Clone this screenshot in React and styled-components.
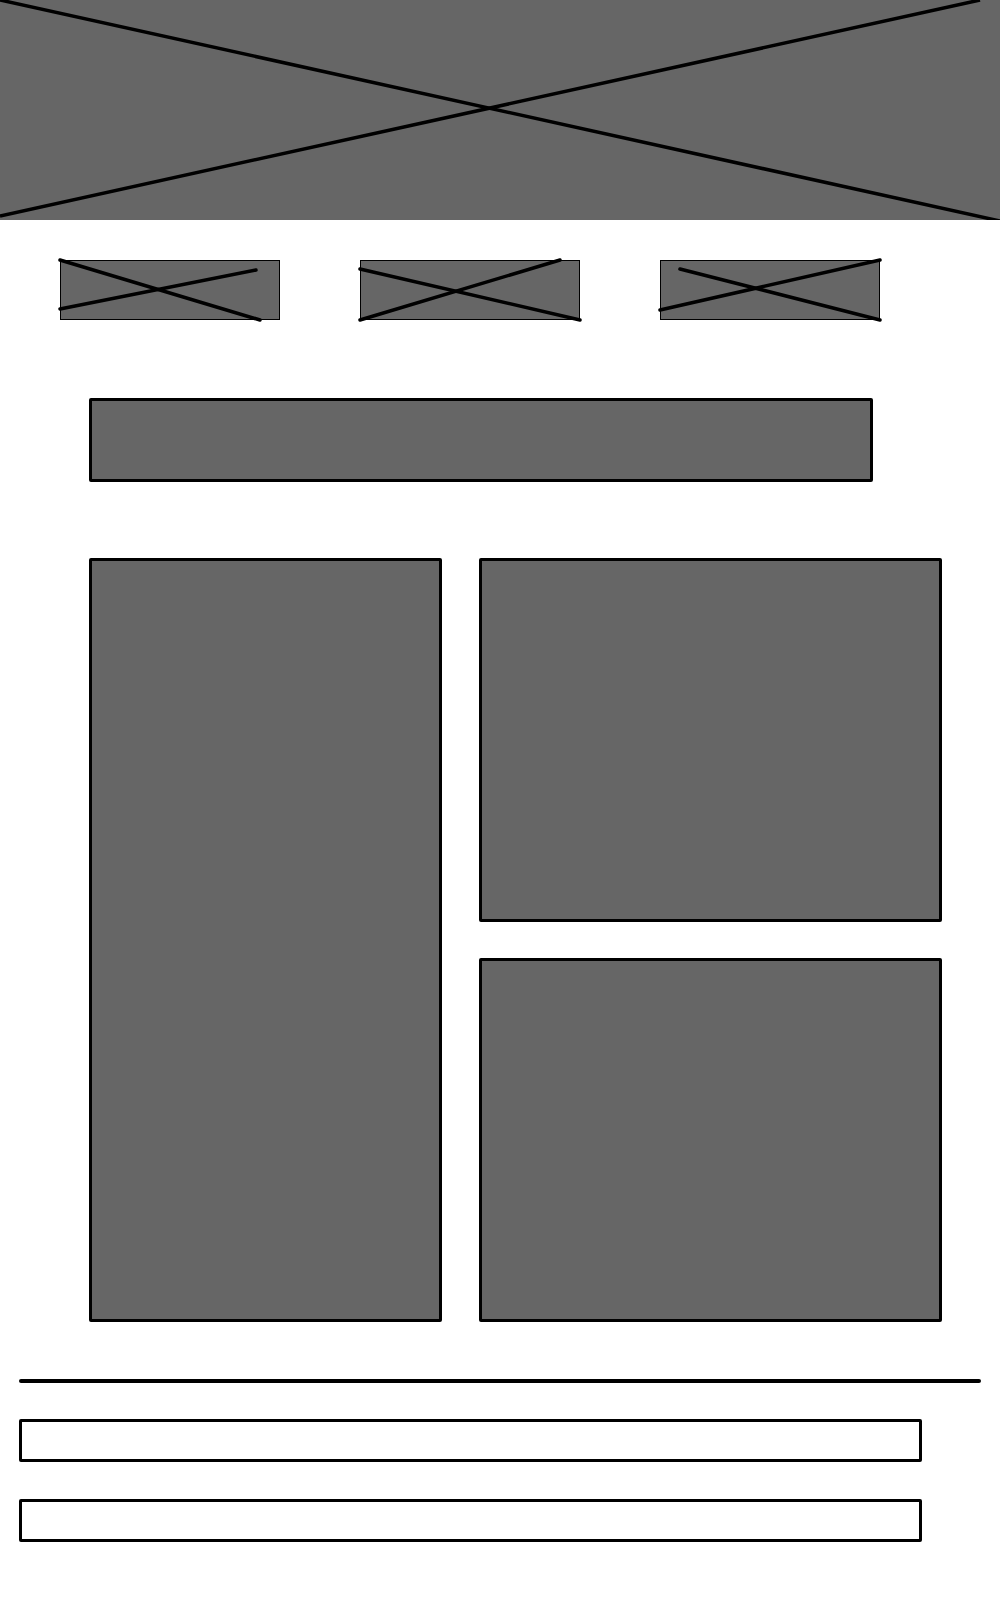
import React from 'react'
import styled, { createGlobalStyle } from 'styled-components'

const thumbs = [
  { a: [0, 0, 200, 60], b: [0, 49, 196, 10] },
  { a: [0, 9, 220, 60], b: [0, 60, 200, 0] },
  { a: [20, 9, 220, 60], b: [0, 50, 220, 0] },
]

const App = () => {
  return (
    <Page>
      <GlobalStyle />
      <Hero>
        <Cross viewBox="0 0 1000 220" preserveAspectRatio="none">
          <line x1="0" y1="0" x2="1000" y2="221" />
          <line x1="0" y1="216" x2="980" y2="0" />
        </Cross>
      </Hero>

      <ThumbRow>
        {thumbs.map((t, i) => (
          <Thumb key={i}>
            <ThumbCross viewBox="0 0 220 60">
              <line x1={t.a[0]} y1={t.a[1]} x2={t.a[2]} y2={t.a[3]} />
              <line x1={t.b[0]} y1={t.b[1]} x2={t.b[2]} y2={t.b[3]} />
            </ThumbCross>
          </Thumb>
        ))}
      </ThumbRow>

      <Banner />

      <CardGrid>
        <Card tall />
        <Card />
        <Card />
      </CardGrid>

      <Footer>
        <Divider />
        <Field />
        <Field />
      </Footer>
    </Page>
  )
}

export default App

const GlobalStyle = createGlobalStyle`
body{
  margin:0 ;
  background:#fff ;
  font-family:"Liberation Sans", Arial, sans-serif ;
}
`
const Page = styled.div`
width:1000px ;
min-height:1600px ;
display:flex ;
flex-direction:column ;
`
const Hero = styled.div`
height:220px ;
width:100% ;
background:#666 ;
position:relative ;
`
const Cross = styled.svg`
position:absolute ;
inset:0 ;
width:100% ;
height:100% ;
line{
  stroke:#000 ;
  stroke-width:3.5 ;
  vector-effect:non-scaling-stroke ;
}
`
const ThumbRow = styled.div`
display:flex ;
gap:80px ;
margin:40px 0 0 60px ;
`
const Thumb = styled.div`
width:220px ;
height:60px ;
box-sizing:border-box ;
background:#666 ;
border:1px solid #000 ;
position:relative ;
`
const ThumbCross = styled.svg`
position:absolute ;
left:-1px ;
top:-1px ;
width:220px ;
height:60px ;
overflow:visible ;
line{
  stroke:#000 ;
  stroke-width:3.5 ;
  stroke-linecap:round ;
}
`
const Banner = styled.div`
margin:78px 0 0 89px ;
width:784px ;
height:84px ;
box-sizing:border-box ;
background:#666 ;
border:3.5px solid #000 ;
border-radius:2px ;
`
const CardGrid = styled.div`
margin:76px 0 0 89px ;
display:grid ;
grid-template-columns:353px 463px ;
grid-template-rows:364px 364px ;
column-gap:37px ;
row-gap:36px ;
`
const Card = styled.div`
grid-row:${({tall})=>tall? 'span 2':'auto'} ;
box-sizing:border-box ;
background:#666 ;
border:3.5px solid #000 ;
border-radius:2px ;
`
const Footer = styled.div`
margin:57px 0 0 19px ;
display:flex ;
flex-direction:column ;
gap:36px ;
`
const Divider = styled.div`
width:962px ;
height:3.5px ;
background:#000 ;
border-radius:2px ;
`
const Field = styled.div`
width:903px ;
height:43px ;
box-sizing:border-box ;
background:#fff ;
border:3.5px solid #000 ;
border-radius:2px ;
& + &{
  margin-top:1px ;
}
`
